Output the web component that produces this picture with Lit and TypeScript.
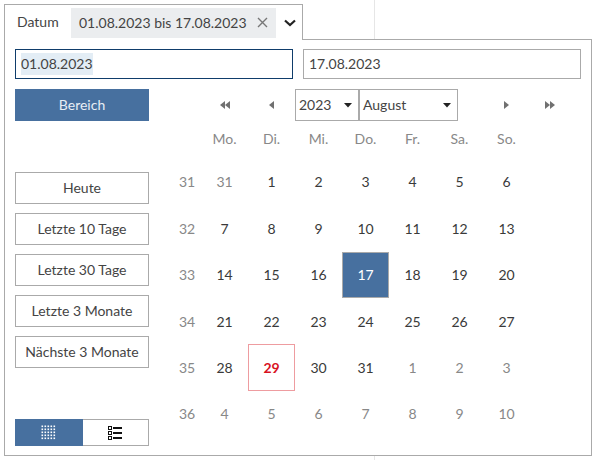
import { LitElement, html, css, svg } from 'lit';
import { customElement } from 'lit/decorators.js';
import { classMap } from 'lit/directives/class-map.js';

type Day = { n: number; muted?: boolean; selected?: boolean; today?: boolean };

const days = (ns: number[], muted = false): Day[] => ns.map((n) => ({ n, muted }));

const weeks: { kw: number; days: Day[] }[] = [
  { kw: 31, days: [{ n: 31, muted: true }, ...days([1, 2, 3, 4, 5, 6])] },
  { kw: 32, days: days([7, 8, 9, 10, 11, 12, 13]) },
  { kw: 33, days: [...days([14, 15, 16]), { n: 17, selected: true }, ...days([18, 19, 20])] },
  { kw: 34, days: days([21, 22, 23, 24, 25, 26, 27]) },
  { kw: 35, days: [{ n: 28 }, { n: 29, today: true }, ...days([30, 31]), ...days([1, 2, 3], true)] },
  { kw: 36, days: days([4, 5, 6, 7, 8, 9, 10], true) },
];

const weekdays = ['Mo.', 'Di.', 'Mi.', 'Do.', 'Fr.', 'Sa.', 'So.'];
const presets = ['Heute', 'Letzte 10 Tage', 'Letzte 30 Tage', 'Letzte 3 Monate', 'Nächste 3 Monate'];

const left = (x: number) => svg`<path d="M${x + 5} 0 V8 L${x} 4 Z" />`;
const right = (x: number) => svg`<path d="M${x} 0 V8 L${x + 5} 4 Z" />`;

const caret = html`<svg class="caret" width="10" height="5" viewBox="0 0 10 5"><path d="M1 0H9L5 4.5Z" /></svg>`;

@customElement('app-root')
export class AppRoot extends LitElement {
  static styles = css`
    :host {
      display: block;
      position: relative;
      height: 460px;
      padding: 4px 0 0 4px;
      box-sizing: border-box;
      font-family: Lato, "Noto Sans", sans-serif;
      font-size: 14px;
      color: #444;
      background: #fff;
    }
    .rule {
      position: absolute;
      left: 374px;
      top: 0;
      bottom: 0;
      width: 1px;
      background: #e6e6e6;
    }
    .tabs {
      position: relative;
      display: flex;
      align-items: center;
      width: 299px;
      height: 36px;
      margin-bottom: -1px;
      box-sizing: border-box;
      border: 1px solid #aaa;
      border-bottom: none;
      background: #fff;
      z-index: 1;
    }
    .tab-label {
      margin-left: 12px;
      width: 54px;
      padding-bottom: 2px;
    }
    .chip {
      display: flex;
      align-items: center;
      width: 205px;
      height: 30px;
      padding: 0 0 1px 8px;
      box-sizing: border-box;
      background: #ebedef;
    }
    .chip svg {
      margin-left: auto;
      margin-right: 8px;
    }
    .chevron {
      margin-left: 8px;
    }
    .panel {
      position: relative;
      width: 588px;
      height: 417px;
      box-sizing: border-box;
      padding: 9px 10px;
      border: 1px solid #aaa;
      background: #fff;
    }
    .inputs {
      display: flex;
      gap: 10px;
    }
    .input {
      display: flex;
      align-items: center;
      width: 278px;
      height: 30px;
      box-sizing: border-box;
      padding: 0 0 2px 5px;
      border: 1px solid #aaa;
    }
    .input.focus {
      border-color: #0f3d6b;
      padding-bottom: 0;
    }
    .input.focus span {
      background: #e3edf5;
      line-height: 21px;
      padding-bottom: 1px;
      margin-top: -1px;
    }
    .body {
      display: flex;
      margin-top: 10px;
      height: 357px;
    }
    .side {
      display: flex;
      flex-direction: column;
      width: 134px;
    }
    .primary {
      height: 32px;
      display: flex;
      align-items: center;
      justify-content: center;
      box-sizing: border-box;
      padding-bottom: 2px;
      background: #47709f;
      color: #e8eef5;
    }
    .presets {
      display: flex;
      flex-direction: column;
      gap: 9px;
      margin-top: 51px;
    }
    .preset {
      height: 32px;
      display: flex;
      align-items: center;
      justify-content: center;
      box-sizing: border-box;
      padding-bottom: 2px;
      border: 1px solid #aaa;
      white-space: nowrap;
    }
    .toggle {
      display: flex;
      margin-top: auto;
      height: 27px;
    }
    .toggle div {
      flex: 1;
      display: flex;
      align-items: center;
      justify-content: center;
      box-sizing: border-box;
      border: 1px solid #aaa;
    }
    .toggle div:first-child {
      background: #47709f;
      border-color: #47709f;
    }
    .toggle div:last-child {
      border-left: none;
    }
    .calendar {
      flex: 1;
    }
    .nav {
      display: flex;
      align-items: center;
      height: 32px;
      padding-left: 52px;
    }
    .nav .arrow {
      width: 47px;
      display: flex;
      justify-content: center;
      fill: #707070;
    }
    .nav .arrow.end {
      width: 44px;
    }
    .nav .gap {
      width: 26px;
    }
    .select {
      display: flex;
      align-items: center;
      justify-content: space-between;
      height: 32px;
      box-sizing: border-box;
      padding: 0 5px 2px 3px;
      border: 1px solid #aaa;
    }
    .select.year {
      width: 64px;
    }
    .select.month {
      width: 99px;
    }
    .caret {
      fill: #222;
      margin-top: 2px;
    }
    .grid {
      display: grid;
      grid-template-columns: 28px repeat(7, 47px);
      grid-auto-rows: 46.4px;
      margin-left: 24px;
      justify-items: center;
      align-items: center;
    }
    .heads {
      display: grid;
      grid-template-columns: 28px repeat(7, 47px);
      justify-items: center;
      margin-left: 24px;
      height: 37.8px;
      color: #888;
      line-height: 36px;
    }
    .kw {
      color: #888;
    }
    .day {
      width: 47px;
      height: 46.4px;
      display: flex;
      align-items: center;
      justify-content: center;
      box-sizing: border-box;
      color: #3a3a3a;
    }
    .day.muted {
      color: #888;
    }
    .day.selected {
      background: #47709f;
      border: 1px solid #aaa;
      color: #fff;
    }
    .day.today {
      border: 1px solid #ee9ca0;
      color: #d8121f;
      font-weight: 700;
    }
  `;

  render() {
    return html`
      <div class="rule"></div>
      <div class="tabs">
        <span class="tab-label">Datum</span>
        <div class="chip">
          01.08.2023 bis 17.08.2023
          <svg width="11" height="11" viewBox="0 0 11 11" fill="none" stroke="#777" stroke-width="1.4">
            <path d="M1 1L10 10M10 1L1 10" />
          </svg>
        </div>
        <svg class="chevron" width="12" height="8" viewBox="0 0 12 8" fill="none" stroke="#222" stroke-width="2.2">
          <path d="M1 1.5L6 6L11 1.5" />
        </svg>
      </div>
      <div class="panel">
        <div class="inputs">
          <div class="input focus"><span>01.08.2023</span></div>
          <div class="input">17.08.2023</div>
        </div>
        <div class="body">
          <div class="side">
            <div class="primary">Bereich</div>
            <div class="presets">
              ${presets.map((p) => html`<div class="preset">${p}</div>`)}
            </div>
            <div class="toggle">
              <div>
                <svg width="15" height="15" viewBox="0 0 15 15" fill="#fff">
                  ${[0, 3, 6, 9, 12].map((y) =>
                    [0, 3, 6, 9, 12].map((x) => svg`<rect x=${x + 0.5} y=${y + 0.5} width="1.6" height="1.6" />`),
                  )}
                </svg>
              </div>
              <div>
                <svg width="14" height="14" viewBox="0 0 14 14">
                  ${[0, 5, 10].map(
                    (y) => svg`
                      <rect x="0.5" y=${y + 0.5} width="3" height="3" fill="none" stroke="#111" />
                      <rect x="5" y=${y + 1} width="9" height="2" fill="#111" />`,
                  )}
                </svg>
              </div>
            </div>
          </div>
          <div class="calendar">
            <div class="nav">
              <span class="arrow"><svg width="10" height="8">${left(0)}${left(5)}</svg></span>
              <span class="arrow"><svg width="5" height="8">${left(0)}</svg></span>
              <div class="select year">2023 ${caret}</div>
              <div class="select month">August ${caret}</div>
              <span class="gap"></span>
              <span class="arrow end"><svg width="5" height="8">${right(0)}</svg></span>
              <span class="arrow end"><svg width="10" height="8">${right(0)}${right(5)}</svg></span>
            </div>
            <div class="heads">
              <span></span>
              ${weekdays.map((d) => html`<span>${d}</span>`)}
            </div>
            <div class="grid">
              ${weeks.map(
                (w) => html`
                  <span class="kw">${w.kw}</span>
                  ${w.days.map(
                    (d) => html`<div
                      class=${classMap({
                        day: true,
                        muted: !!d.muted,
                        selected: !!d.selected,
                        today: !!d.today,
                      })}
                    >
                      ${d.n}
                    </div>`,
                  )}
                `,
              )}
            </div>
          </div>
        </div>
      </div>
    `;
  }
}
